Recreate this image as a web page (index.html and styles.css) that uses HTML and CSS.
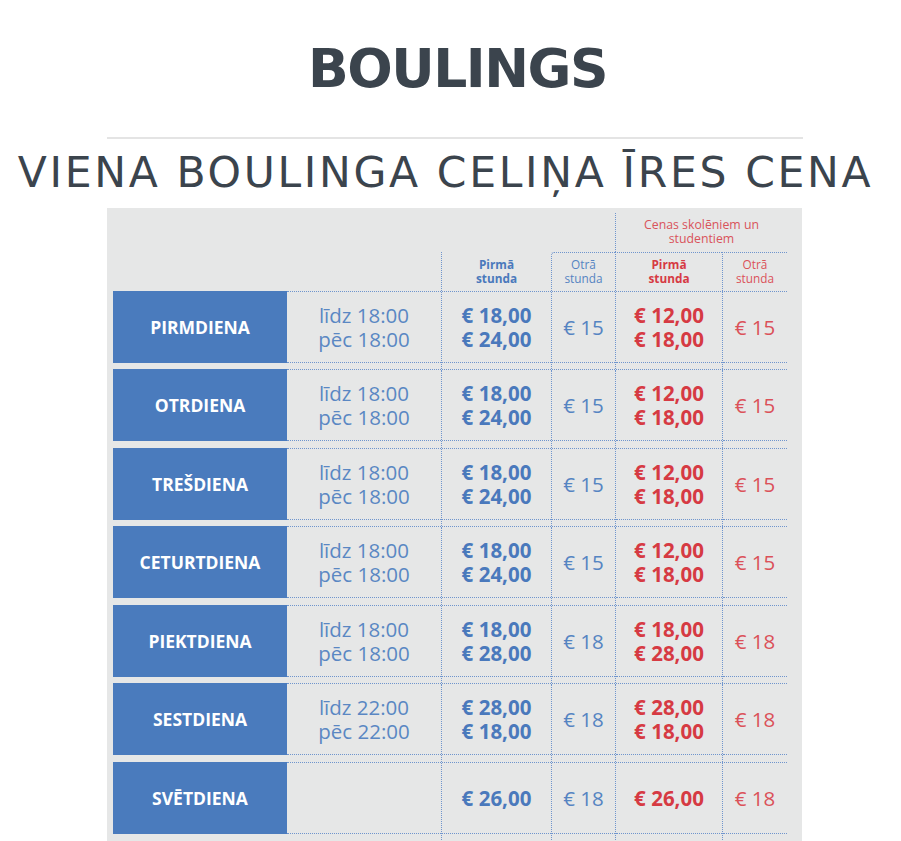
FILE: index.html
```html
<!DOCTYPE html>
<html lang="lv">
<head>
<meta charset="utf-8">
<title>Boulings</title>
<link rel="stylesheet" href="styles.css">
</head>
<body>
<div class="page">
  <h1 class="title">BOULINGS</h1>
  <div class="rule"></div>
  <h2 class="subtitle">VIENA BOULINGA CELIŅA ĪRES CENA</h2>

  <div class="prices">
    <div class="head">
      <div class="head-spacer"></div>
      <div class="head-cols">
        <div class="head-top">
          <div class="students">Cenas skolēniem un<br>studentiem</div>
        </div>
        <div class="head-bottom">
          <div class="hc w1 blue b">Pirmā<br>stunda</div>
          <div class="hc w2 blue top round">Otrā<br>stunda</div>
          <div class="hc w3 red b top">Pirmā<br>stunda</div>
          <div class="hc w4 red top">Otrā<br>stunda</div>
        </div>
      </div>
    </div>

    <div class="row">
      <div class="day">PIRMDIENA</div>
      <div class="data">
        <div class="cell w0"><div class="in time">līdz 18:00<br>pēc 18:00</div></div>
        <div class="cell w1 line"><div class="in blue b">€ 18,00<br>€ 24,00</div></div>
        <div class="cell w2 line"><div class="in blue">€ 15</div></div>
        <div class="cell w3 line"><div class="in red b">€ 12,00<br>€ 18,00</div></div>
        <div class="cell w4 line"><div class="in red">€ 15</div></div>
      </div>
    </div>

    <div class="row">
      <div class="day">OTRDIENA</div>
      <div class="data">
        <div class="cell w0"><div class="in time">līdz 18:00<br>pēc 18:00</div></div>
        <div class="cell w1 line"><div class="in blue b">€ 18,00<br>€ 24,00</div></div>
        <div class="cell w2 line"><div class="in blue">€ 15</div></div>
        <div class="cell w3 line"><div class="in red b">€ 12,00<br>€ 18,00</div></div>
        <div class="cell w4 line"><div class="in red">€ 15</div></div>
      </div>
    </div>

    <div class="row">
      <div class="day">TREŠDIENA</div>
      <div class="data">
        <div class="cell w0"><div class="in time">līdz 18:00<br>pēc 18:00</div></div>
        <div class="cell w1 line"><div class="in blue b">€ 18,00<br>€ 24,00</div></div>
        <div class="cell w2 line"><div class="in blue">€ 15</div></div>
        <div class="cell w3 line"><div class="in red b">€ 12,00<br>€ 18,00</div></div>
        <div class="cell w4 line"><div class="in red">€ 15</div></div>
      </div>
    </div>

    <div class="row">
      <div class="day">CETURTDIENA</div>
      <div class="data">
        <div class="cell w0"><div class="in time">līdz 18:00<br>pēc 18:00</div></div>
        <div class="cell w1 line"><div class="in blue b">€ 18,00<br>€ 24,00</div></div>
        <div class="cell w2 line"><div class="in blue">€ 15</div></div>
        <div class="cell w3 line"><div class="in red b">€ 12,00<br>€ 18,00</div></div>
        <div class="cell w4 line"><div class="in red">€ 15</div></div>
      </div>
    </div>

    <div class="row">
      <div class="day">PIEKTDIENA</div>
      <div class="data">
        <div class="cell w0"><div class="in time">līdz 18:00<br>pēc 18:00</div></div>
        <div class="cell w1 line"><div class="in blue b">€ 18,00<br>€ 28,00</div></div>
        <div class="cell w2 line"><div class="in blue">€ 18</div></div>
        <div class="cell w3 line"><div class="in red b">€ 18,00<br>€ 28,00</div></div>
        <div class="cell w4 line"><div class="in red">€ 18</div></div>
      </div>
    </div>

    <div class="row">
      <div class="day">SESTDIENA</div>
      <div class="data">
        <div class="cell w0"><div class="in time">līdz 22:00<br>pēc 22:00</div></div>
        <div class="cell w1 line"><div class="in blue b">€ 28,00<br>€ 18,00</div></div>
        <div class="cell w2 line"><div class="in blue">€ 18</div></div>
        <div class="cell w3 line"><div class="in red b">€ 28,00<br>€ 18,00</div></div>
        <div class="cell w4 line"><div class="in red">€ 18</div></div>
      </div>
    </div>

    <div class="row">
      <div class="day">SVĒTDIENA</div>
      <div class="data">
        <div class="cell w0"><div class="in time"></div></div>
        <div class="cell w1 line"><div class="in blue b">€ 26,00</div></div>
        <div class="cell w2 line"><div class="in blue">€ 18</div></div>
        <div class="cell w3 line"><div class="in red b">€ 26,00</div></div>
        <div class="cell w4 line"><div class="in red">€ 18</div></div>
      </div>
    </div>
  </div>
</div>
</body>
</html>
```

FILE: styles.css
```css
html, body {
  margin: 0;
  padding: 0;
  background: #ffffff;
}

.page {
  width: 901px;
  padding-top: 36.5px;
}

.title {
  margin: 0;
  padding-left: 14px;
  font-family: "DejaVu Sans", sans-serif;
  font-weight: bold;
  font-size: 53.5px;
  line-height: 64px;
  letter-spacing: -1.5px;
  text-align: center;
  color: #3b444d;
}

.rule {
  margin: 36.5px 0 0 107px;
  width: 696px;
  height: 2px;
  background: #e4e4e4;
}

.subtitle {
  margin: 8.3px 0 0 0;
  padding-right: 10px;
  font-family: "DejaVu Sans", sans-serif;
  font-weight: normal;
  font-size: 42.5px;
  line-height: 52px;
  letter-spacing: 2.65px;
  text-align: center;
  white-space: nowrap;
  color: #3b444d;
}

.prices {
  margin: 8.7px 0 0 107px;
  width: 695px;
  box-sizing: border-box;
  padding: 0 15px 10px 6px;
  background: #e6e7e7;
  font-family: "Open Sans", sans-serif;
}

/* header */
.head {
  display: flex;
  height: 83px;
}

.head-spacer {
  width: 328px;
}

.head-cols {
  width: 346px;
  display: flex;
  flex-direction: column;
}

.head-top {
  height: 44px;
  display: flex;
  justify-content: flex-end;
}

.students {
  margin-top: 5px;
  width: 172px;
  box-sizing: border-box;
  border-left: 1px dotted #6f95cd;
  padding-top: 5px;
  font-size: 12.3px;
  line-height: 14px;
  text-align: center;
  color: #d9535b;
}

.head-bottom {
  height: 39px;
  display: flex;
}

.hc {
  box-sizing: border-box;
  border-left: 1px dotted #6f95cd;
  padding-top: 5px;
  font-size: 11.8px;
  line-height: 14.5px;
  text-align: center;
}

.hc.top {
  border-top: 1px dotted #6f95cd;
  padding-top: 4px;
}

.hc.round {
  border-top-left-radius: 3px;
}

/* widths of columns */
.w0 { width: 154px; }
.w1 { width: 110px; }
.w2 { width: 64px; }
.w3 { width: 107px; }
.w4 { width: 65px; }

.blue { color: #4a79bc; }
.red { color: #d63a43; }
.b { font-weight: bold; }
.red:not(.b) { color: #db5159; }
.blue:not(.b) { color: #5584c2; }

/* rows */
.row {
  display: flex;
  height: 78.5px;
}

.day {
  width: 174px;
  height: 72px;
  background: #4a7bbd;
  color: #ffffff;
  font-weight: bold;
  font-size: 17.5px;
  display: flex;
  align-items: center;
  justify-content: center;
}

.data {
  width: 500px;
  display: flex;
  border-top: 1px dotted #6f95cd;
  box-sizing: border-box;
}

.cell {
  box-sizing: border-box;
  height: 77.5px;
}

.cell.line {
  border-left: 1px dotted #6f95cd;
}

.in {
  height: 71px;
  box-sizing: border-box;
  border-bottom: 1px dotted #6f95cd;
  display: flex;
  align-items: center;
  justify-content: center;
  text-align: center;
  font-size: 20.5px;
  line-height: 24px;
}

.time {
  color: #5a87c3;
  font-size: 20.5px;
}
```
